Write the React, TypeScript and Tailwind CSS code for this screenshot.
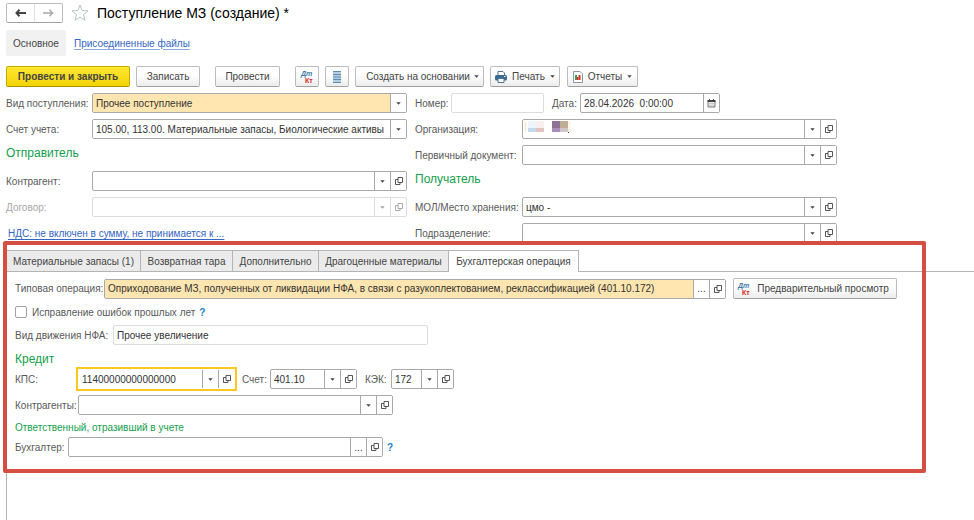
import { ReactNode } from "react";
import clsx from "clsx";

const Caret = () => (
  <svg width="5" height="3" viewBox="0 0 5 3" className="shrink-0" aria-hidden="true">
    <path d="M0.300 0.200h4.400L2.500 2.800z" fill="currentColor" />
  </svg>
);

const OpenIcon = () => (
  <svg width="10" height="10" viewBox="0 0 10 10" fill="none" stroke="currentColor" strokeWidth="0.900" aria-hidden="true">
    <path d="M4 1.500h4.500v5H4z" />
    <path d="M4 3.500H1.500v5h4.500v-2" />
  </svg>
);

const DtKtIcon = () => (
  <svg width="14" height="14" viewBox="0 0 14 14" className="shrink-0" aria-hidden="true">
    <g fontFamily="Liberation Sans, sans-serif" fontWeight="700" fontSize="7">
      <text x="1" y="6" fill="#3f7ba6" fontStyle="italic">
        Дт
      </text>
      <text x="5" y="13" fill="#d0261c">
        Кт
      </text>
    </g>
  </svg>
);

const ListIcon = () => (
  <svg width="10" height="12" viewBox="0 0 10 12" aria-hidden="true">
    <path d="M1 0h8v12H1z" fill="#b4cde0" />
    <path d="M1 0.500h8M1 3.500h8M1 6h8M1 8.500h8M1 11.500h8" stroke="#5f8cae" />
  </svg>
);

const PrinterIcon = () => (
  <svg width="12" height="12" viewBox="0 0 12 12" className="shrink-0" aria-hidden="true">
    <path d="M3 0.500h5l1.500 1.500V5H3z" fill="#fff" stroke="#4d7595" />
    <rect x="0" y="4" width="12" height="5.500" rx="1.500" fill="#3b6c92" />
    <path d="M3 7.500h6v4H3z" fill="#fff" stroke="#4d7595" />
    <path d="M9 5.500h1.500" stroke="#fff" />
  </svg>
);

const ReportIcon = () => (
  <svg width="10" height="12" viewBox="0 0 10 12" className="shrink-0" aria-hidden="true">
    <path d="M0.500 0.500h6.500l2.500 2.500v8.500h-9z" fill="#fff" stroke="#8b98a4" />
    <path d="M2 4h2v5H2z" fill="#3c9a4c" />
    <path d="M4 6h1.500v3H4z" fill="#dc3222" />
    <path d="M5.500 4h2v5h-2z" fill="#dc3222" />
  </svg>
);

const CalendarIcon = () => (
  <svg width="9" height="9" viewBox="0 0 9 9" aria-hidden="true">
    <path d="M1 1.500h7v6.500H1z" fill="#eee" stroke="#666" strokeWidth="0.900" />
    <path d="M0.500 1h8v2h-8zM2 0h1v2H2zM6 0h1v2H6z" fill="#444" />
    <path d="M2 4.500h5M2 6.300h5" stroke="#bbb" strokeWidth="0.700" />
  </svg>
);

const HiddenName = () => (
  <svg width="46" height="14" viewBox="0 0 46 14" aria-hidden="true" className="ml-0.5 shrink-0">
    <path d="M0 2h1v9H0z" fill="#fbe5bb" />
    <path d="M3 1h8v7H3z" fill="#eef5fb" />
    <path d="M11 1h8v7h-8z" fill="#f8efee" />
    <path d="M3 8h8v4H3z" fill="#c5d7ea" />
    <path d="M11 8h8v4h-8z" fill="#e3c3bd" />
    <path d="M27 1h8v7h-8z" fill="#8d7093" />
    <path d="M35 1h8v7h-8z" fill="#bfae95" />
    <path d="M27 8h8v4h-8z" fill="#a58eb8" />
    <path d="M35 8h8v4h-8z" fill="#d0c5c8" />
    <path d="M43 1h3v11h-3z" fill="#fff7e8" />
    <path d="M43 12h1v1h-1z" fill="#333" />
  </svg>
);

interface FieldProps {
  id: string;
  label: string;
  value?: string;
  buttons?: string[];
  labelClass?: string;
  boxClass?: string;
  inputClass?: string;
  muted?: boolean;
  before?: ReactNode;
}

const cellNames: Record<string, string> = {
  list: "Выбрать из списка",
  open: "Открыть",
  more: "Показать все",
  date: "Календарь",
};

const Field = ({
  id,
  label,
  value = "",
  buttons = ["list", "open"],
  labelClass,
  boxClass = "flex-1 border-[#a9a9a9]",
  inputClass = "px-[3px]",
  muted,
  before,
}: FieldProps) => (
  <>
    <label htmlFor={id} className={clsx("shrink-0 whitespace-nowrap", muted ? "text-[#a8a8a8]" : "text-[#595959]", labelClass)}>
      {label}
    </label>
    <div className={clsx("flex h-5 min-w-0 overflow-hidden rounded-xs border bg-white", boxClass)}>
      {before}
      <input
        id={id}
        defaultValue={value}
        disabled={muted}
        className={clsx("w-0 min-w-0 flex-1 bg-transparent text-[#333] outline-none", inputClass)}
      />
      {buttons.map((b) => (
        <button
          key={b}
          type="button"
          aria-label={cellNames[b]}
          disabled={muted}
          className={clsx(
            "flex w-4 shrink-0 items-center justify-center border-l bg-white",
            muted ? "border-[#dcdcdc] text-[#a0a0a0]" : "border-[#a9a9a9] text-[#444]",
          )}
        >
          {b === "list" && <Caret />}
          {b === "open" && <OpenIcon />}
          {b === "more" && "..."}
          {b === "date" && <CalendarIcon />}
        </button>
      ))}
    </div>
  </>
);

const SelectField = ({ id, label, value, filled }: { id: string; label: string; value: string; filled?: boolean }) => (
  <div className="flex items-center">
    <label htmlFor={id} className="w-[86px] shrink-0 whitespace-nowrap text-[#595959]">
      {label}
    </label>
    <div className="relative flex h-5 min-w-0 flex-1 overflow-hidden rounded-xs border border-[#a9a9a9]">
      <select
        id={id}
        className={clsx("min-w-0 flex-1 appearance-none pl-[3px] pr-5 text-[#333] outline-none", filled ? "bg-[#ffe6b0]" : "bg-white")}
      >
        <option>{value}</option>
      </select>
      <span className="pointer-events-none absolute inset-y-0 right-0 flex w-4 items-center justify-center border-l border-[#a9a9a9] bg-white text-[#444]">
        <Caret />
      </span>
    </div>
  </div>
);

interface ToolButtonProps {
  children: ReactNode;
  className?: string;
  label?: string;
}

const ToolButton = ({ children, className, label }: ToolButtonProps) => (
  <button
    type="button"
    aria-label={label}
    className={clsx(
      "flex h-[21px] shrink-0 items-center justify-center whitespace-nowrap rounded-xs border border-[#bcbcbc] border-b-[#a0a0a0] bg-linear-to-b from-white from-40% to-[#ececec] text-[#444]",
      className,
    )}
  >
    {children}
  </button>
);

const tabs = ["Материальные запасы (1)", "Возвратная тара", "Дополнительно", "Драгоценные материалы", "Бухгалтерская операция"];
const tabWidths = ["w-[134px]", "w-[92px]", "w-[86px]", "w-[130px]", "w-[130px]"];

const Header = () => (
  <header className="pl-1.5">
    <div className="flex h-5 items-center">
      <div className="flex h-5 w-[57px] rounded-xs border border-[#bcbcbc] border-b-[#a0a0a0]">
        <button type="button" aria-label="Назад" className="flex flex-1 items-center justify-center border-r border-[#e0e0e0] text-[#444]">
          <svg width="11" height="8" viewBox="0 0 11 8" fill="none" stroke="currentColor" strokeWidth="2">
            <path d="M11 4H2M4.500 0.800L1.500 4l3 3.200" />
          </svg>
        </button>
        <button type="button" aria-label="Вперед" className="flex flex-1 items-center justify-center text-[#a8a8a8]">
          <svg width="11" height="8" viewBox="0 0 11 8" fill="none" stroke="currentColor" strokeWidth="1.500">
            <path d="M0 4h9.500M6.500 0.800L9.500 4l-3 3.200" />
          </svg>
        </button>
      </div>
      <button type="button" aria-label="В избранное" className="ml-2">
        <svg width="18" height="18" viewBox="0 0 18 18" fill="#fff" stroke="#bcc3cb">
          <path d="M9 1l2.100 5.500 6 .3-4.700 3.700 1.600 5.800L9 13l-5 3.300 1.600-5.800L.9 6.800l6-.3z" />
        </svg>
      </button>
      <h1 className="ml-2 text-[14px] text-black">Поступление МЗ (создание) *</h1>
    </div>
    <nav className="mt-[7px] flex h-[26px] items-center">
      <a href="#main" className="flex h-full w-[60px] items-center justify-center rounded-xs bg-[#f1f1f1] text-[#444]">
        Основное
      </a>
      <a href="#files" className="ml-2 text-[#3566c4] underline decoration-[#8aa6dd] underline-offset-2">
        Присоединенные файлы
      </a>
    </nav>
    <div className="mt-[10px] flex items-center">
      <button
        type="button"
        className="h-[21px] w-[124px] shrink-0 rounded-xs border border-[#c7a900] border-b-[#a88f00] bg-linear-to-b from-[#ffe82e] to-[#f2d300] font-bold text-[#444]"
      >
        Провести и закрыть
      </button>
      <ToolButton className="ml-1.5 w-16">Записать</ToolButton>
      <ToolButton className="ml-[15px] w-[65px]">Провести</ToolButton>
      <ToolButton className="ml-[15px] w-6" label="Дт Кт">
        <DtKtIcon />
      </ToolButton>
      <ToolButton className="ml-1.5 w-6" label="Журнал">
        <ListIcon />
      </ToolButton>
      <ToolButton className="ml-1.5 w-[129px] gap-1 pl-1.5">
        Создать на основании <Caret />
      </ToolButton>
      <ToolButton className="ml-1.5 w-[70px] gap-[5px]">
        <PrinterIcon /> Печать <Caret />
      </ToolButton>
      <ToolButton className="ml-[7px] w-[71px] gap-[5px]">
        <ReportIcon /> Отчеты <Caret />
      </ToolButton>
    </div>
  </header>
);

const DocumentFields = () => (
  <div className="mt-1.5 grid grid-cols-[401fr_422fr] gap-2 pl-1.5 pr-[137px]">
    <div className="flex min-w-0 flex-col gap-1.5">
      <SelectField id="kind" label="Вид поступления:" value="Прочее поступление" filled />
      <SelectField id="account" label="Счет учета:" value="105.00, 113.00. Материальные запасы, Биологические активы" />
      <h2 className="h-5 text-[12px] leading-4 text-[#12a04c]">Отправитель</h2>
      <div className="flex items-center">
        <Field id="partner" label="Контрагент:" labelClass="w-[86px]" />
      </div>
      <div className="flex items-center">
        <Field id="contract" label="Договор:" labelClass="w-[86px]" boxClass="flex-1 border-[#dcdcdc]" muted />
      </div>
      <a href="#vat" className="ml-0.5 self-start leading-[21px] text-[#3566c4] underline underline-offset-2">
        НДС: не включен в сумму, не принимается к ...
      </a>
    </div>
    <div className="flex min-w-0 flex-col gap-1.5">
      <div className="flex items-center">
        <Field id="number" label="Номер:" labelClass="w-9" boxClass="w-[93px] border-[#dcdcdc]" buttons={[]} />
        <Field
          id="date"
          label="Дата:"
          value="28.04.2026  0:00:00"
          labelClass="ml-2 w-7"
          boxClass="w-[140px] border-[#a9a9a9]"
          buttons={["date"]}
        />
      </div>
      <div className="flex items-center">
        <Field id="org" label="Организация:" labelClass="w-[107px]" before={<HiddenName />} />
      </div>
      <div className="flex items-center">
        <Field id="source" label="Первичный документ:" labelClass="w-[107px]" />
      </div>
      <h2 className="h-5 text-[12px] leading-4 text-[#12a04c]">Получатель</h2>
      <div className="flex items-center">
        <Field id="storage" label="МОЛ/Место хранения:" value="цмо -" labelClass="w-[107px]" />
      </div>
      <div className="flex items-center">
        <Field id="division" label="Подразделение:" labelClass="w-[107px]" />
      </div>
    </div>
  </div>
);

const Operation = () => (
  <section className="flex flex-col pb-4 pl-2 pt-1.5">
    <div className="flex items-center pr-[77px]">
      <Field
        id="operation"
        label="Типовая операция:"
        value="Оприходование МЗ, полученных от ликвидации НФА, в связи с разукоплектованием, реклассификацией (401.10.172)"
        labelClass="w-[89px]"
        boxClass="flex-1 border-[#a9a9a9]"
        inputClass="px-[3px] bg-[#ffe6b0]!"
        buttons={["more", "open"]}
      />
      <ToolButton className="ml-[7px] w-[164px] gap-1.5 pr-1">
        <DtKtIcon /> Предварительный просмотр
      </ToolButton>
    </div>
    <div className="mt-[7px] flex h-3 items-center">
      <input id="fix" type="checkbox" className="size-3 appearance-none rounded-xs border border-[#a0a0a0] bg-white checked:bg-[#ffe6b0]" />
      <label htmlFor="fix" className="ml-[5px] text-[#595959]">
        Исправление ошибок прошлых лет
      </label>
      <a href="#help-fix" className="ml-1 font-bold text-[#1c7fc0]">
        ?
      </a>
    </div>
    <div className="mt-[7px] flex items-center">
      <Field
        id="movement"
        label="Вид движения НФА:"
        value="Прочее увеличение"
        labelClass="w-[98px]"
        boxClass="w-[315px] border-[#dcdcdc]"
        buttons={[]}
      />
    </div>
    <h2 className="mt-1.5 text-[12px] leading-4 text-[#12a04c]">Кредит</h2>
    <div className="flex h-6 items-center">
      <label htmlFor="kps" className="w-[61px] text-[#595959]">
        КПС:
      </label>
      <div className="flex h-6 w-[161px] items-center border-2 border-[#fcc81e] pr-px">
        <input id="kps" defaultValue="11400000000000000" className="w-0 flex-1 pl-1 text-[#333] outline-none" />
        <button type="button" aria-label="Выбрать из списка" className="flex h-[18px] w-4 items-center justify-center border-l border-[#a9a9a9] text-[#444]">
          <Caret />
        </button>
        <button type="button" aria-label="Открыть" className="flex h-[18px] w-4 items-center justify-center border-l border-[#a9a9a9] text-[#444]">
          <OpenIcon />
        </button>
      </div>
      <Field id="acc" label="Счет:" value="401.10" labelClass="ml-[5px] w-7" boxClass="w-[87px] border-[#a9a9a9]" />
      <Field id="kek" label="КЭК:" value="172" labelClass="ml-2 w-[26px]" boxClass="w-[63px] border-[#a9a9a9]" />
    </div>
    <div className="mt-1 flex items-center">
      <Field id="partners" label="Контрагенты:" labelClass="w-[63px]" boxClass="w-[315px] border-[#a9a9a9]" />
    </div>
    <h3 className="mt-1 leading-[18px] text-[#12a04c]">Ответственный, отразивший в учете</h3>
    <div className="flex items-center">
      <Field
        id="accountant"
        label="Бухгалтер:"
        labelClass="w-[53px]"
        boxClass="w-[315px] border-[#a9a9a9]"
        buttons={["more", "open"]}
      />
      <a href="#help-accountant" className="ml-1 font-bold text-[#1c7fc0]">
        ?
      </a>
    </div>
  </section>
);

const App = () => (
  <main className="flex min-h-screen flex-col overflow-hidden bg-white pt-[3px] font-['Liberation_Sans',Arial,sans-serif] text-[10px] leading-[15px]">
    <Header />
    <DocumentFields />
    <div className="ml-1.5 mt-1.5 flex flex-1 flex-col border-l border-[#b4b4b4]">
      <div className="relative">
        <div role="tablist" className="flex h-[22px] border-b border-[#b4b4b4]">
          {tabs.map((tab, i) => (
            <button
              key={tab}
              type="button"
              role="tab"
              aria-selected={i === 4}
              className={clsx(
                "shrink-0 whitespace-nowrap border-r border-t border-[#b4b4b4] text-[#444]",
                tabWidths[i],
                i === 4 ? "-mb-px bg-white" : "bg-[#ebebeb]",
              )}
            >
              {tab}
            </button>
          ))}
        </div>
        <Operation />
        <div className="pointer-events-none absolute -left-1 -top-[9px] bottom-0 right-12 rounded-xs border-4 border-[#d54e42]" />
      </div>
    </div>
  </main>
);

export default App;
